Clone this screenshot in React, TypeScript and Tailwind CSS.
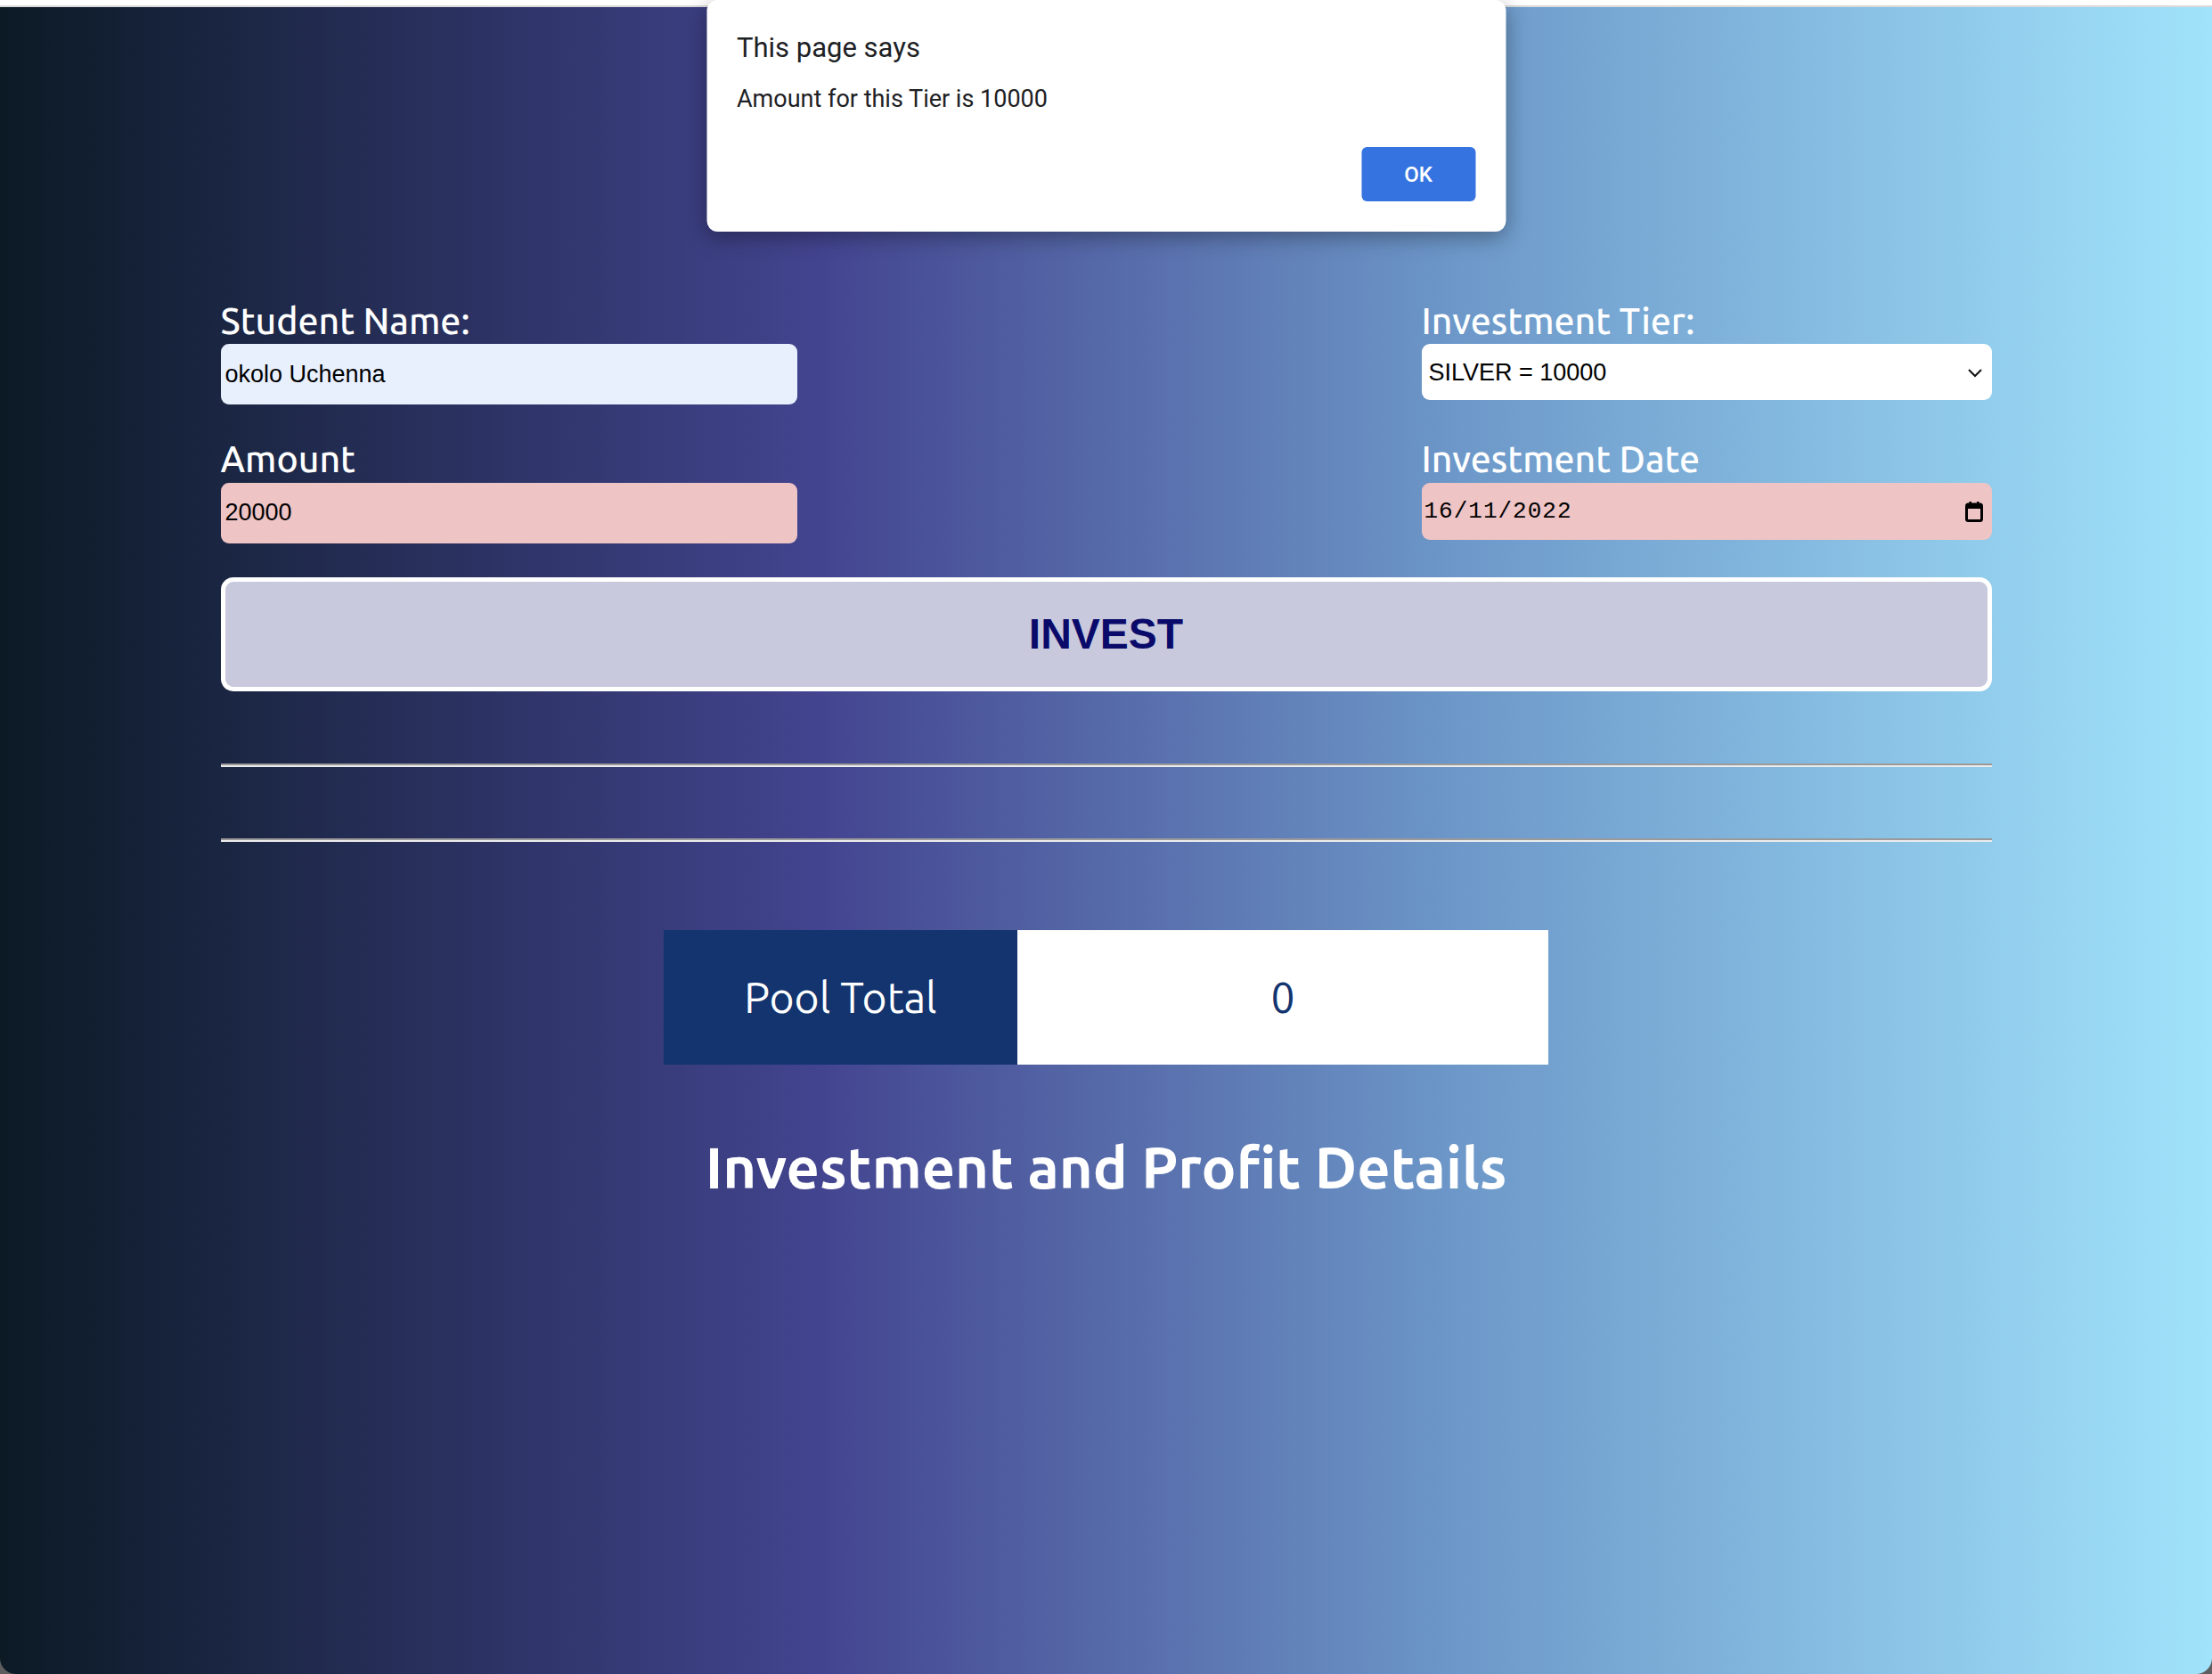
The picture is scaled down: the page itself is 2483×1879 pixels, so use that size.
import { useState } from 'react';

const labelFont = { fontFamily: 'Ubuntu, Lato, "Open Sans", sans-serif' };

function FieldLabel({ children }: { children: React.ReactNode }) {
  return (
    <label className="block text-white text-[41px] leading-[1.28] font-medium">
      {children}
    </label>
  );
}

function AlertDialog({ message, onClose }: { message: string; onClose: () => void }) {
  return (
    <div className="absolute left-1/2 top-0 z-10 h-[260px] w-[897px] -translate-x-1/2 rounded-[12px] bg-white px-[34px] pt-[36px] shadow-[0_6px_24px_rgba(0,0,0,0.35)] font-[Roboto,'Liberation_Sans',sans-serif] text-[#202124]">
      <div className="text-[31px] leading-[36px]">This page says</div>
      <div className="mt-[24px] text-[27px] leading-[31px]">{message}</div>
      <div className="mt-[38px] flex justify-end">
        <button
          onClick={onClose}
          className="h-[61px] w-[128px] rounded-[6px] bg-[#3574e0] text-[24px] font-medium text-white"
        >
          OK
        </button>
      </div>
    </div>
  );
}

export default function App() {
  const [showAlert, setShowAlert] = useState(true);
  const [name, setName] = useState('okolo Uchenna');
  const [amount, setAmount] = useState('20000');
  const [tier, setTier] = useState('10000');
  const [date, setDate] = useState('16/11/2022');

  return (
    <div className="h-[1879px] bg-[#5e5e5e]">
      <div className="relative flex h-[1879px] flex-col rounded-b-[18px] bg-[linear-gradient(90deg,#0b1a25_0%,#43448f_37%,#6d98c9_66%,#a1e3fb_100%)]">
        <div className="h-[6px] bg-white" />
        <div className="h-[2px] bg-[#dadada]" />

        {showAlert && (
          <AlertDialog message="Amount for this Tier is 10000" onClose={() => setShowAlert(false)} />
        )}

        <div className="mx-auto w-[1988px] pt-[326px]">
          {/* Form fields */}
          <div className="grid grid-cols-[647px_640px] justify-between gap-y-[35px]" style={labelFont}>
            <div>
              <FieldLabel>Student Name:</FieldLabel>
              <input
                value={name}
                onChange={(e) => setName(e.target.value)}
                className="block h-[68px] w-full rounded-[9px] bg-[#e8f0fe] px-[5px] font-['Liberation_Sans',Arial,sans-serif] text-[27px] text-black outline-none"
              />
            </div>

            <div>
              <FieldLabel>Investment Tier:</FieldLabel>
              <div className="relative">
                <select
                  value={tier}
                  onChange={(e) => setTier(e.target.value)}
                  className="block h-[63px] w-full appearance-none rounded-[9px] bg-white pl-[8px] font-['Liberation_Sans',Arial,sans-serif] text-[27px] text-black outline-none"
                >
                  <option value="5000">BRONZE = 5000</option>
                  <option value="10000">SILVER = 10000</option>
                  <option value="20000">GOLD = 20000</option>
                </select>
                <svg
                  className="pointer-events-none absolute right-[10px] top-1/2 -translate-y-1/2"
                  width="18"
                  height="12"
                  viewBox="0 0 18 12"
                  fill="none"
                >
                  <path d="M2 3l7 7 7-7" stroke="#111" strokeWidth="2" />
                </svg>
              </div>
            </div>

            <div>
              <FieldLabel>Amount</FieldLabel>
              <input
                value={amount}
                onChange={(e) => setAmount(e.target.value)}
                className="block h-[68px] w-full rounded-[9px] bg-[#eec4c5] px-[5px] font-['Liberation_Sans',Arial,sans-serif] text-[27px] text-black outline-none"
              />
            </div>

            <div>
              <FieldLabel>Investment Date</FieldLabel>
              <div className="relative">
                <input
                  value={date}
                  onChange={(e) => setDate(e.target.value)}
                  className="block h-[64px] w-full rounded-[9px] bg-[#eec4c5] px-[3px] font-['Liberation_Mono',monospace] text-[26px] tracking-[1px] text-black outline-none"
                />
                <svg
                  className="pointer-events-none absolute right-[10px] top-1/2 -translate-y-1/2"
                  width="20"
                  height="24"
                  viewBox="0 0 20 24"
                  fill="none"
                >
                  <rect x="1.5" y="4" width="17" height="18.5" rx="2" stroke="#000" strokeWidth="3" />
                  <rect x="1.5" y="4" width="17" height="5" fill="#000" />
                  <rect x="4.5" y="1" width="2.5" height="4" fill="#000" />
                  <rect x="13" y="1" width="2.5" height="4" fill="#000" />
                </svg>
              </div>
            </div>
          </div>

          <button className="mt-[38px] block h-[128px] w-full rounded-[14px] border-[5px] border-white bg-[#c8c9dc] font-['Liberation_Sans',Arial,sans-serif] text-[48px] font-bold text-[#0a0a6b]">
            INVEST
          </button>

          <div className="mt-[81px] border-t-2 border-b-2 border-t-[#9a9a9a] border-b-[#ececec]" />
          <div className="mt-[80px] border-t-2 border-b-2 border-t-[#9a9a9a] border-b-[#ececec]" />
        </div>

        {/* Pool total */}
        <div className="mx-auto mt-[99px] flex h-[151px] w-[993px]" style={labelFont}>
          <div className="flex w-[397px] items-center justify-center bg-[#13346f] text-[48px] text-white">
            Pool Total
          </div>
          <div className="flex flex-1 items-center justify-center bg-white text-[48px] text-[#13346f]">
            0
          </div>
        </div>

        <h2 className="mt-[74px] text-center text-[65px] font-bold leading-[1.25] text-white" style={labelFont}>
          Investment and Profit Details
        </h2>
      </div>
    </div>
  );
}
